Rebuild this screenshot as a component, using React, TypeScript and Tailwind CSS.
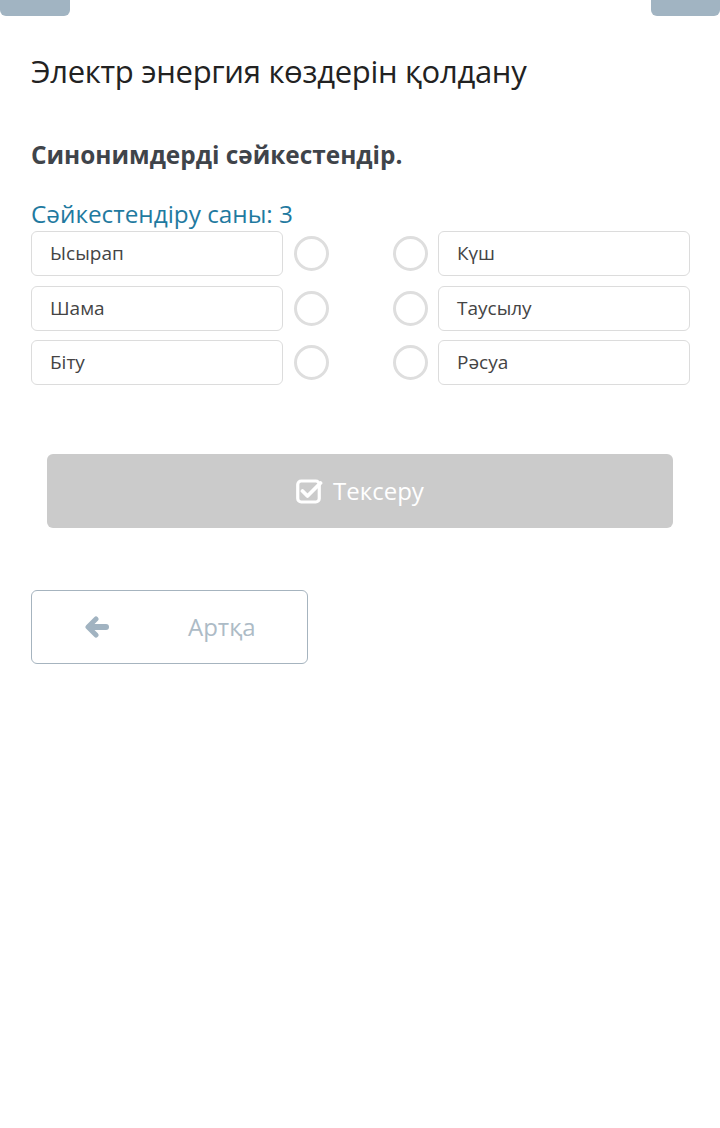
import React from 'react';

const left = ['Ысырап', 'Шама', 'Біту'];
const right = ['Күш', 'Таусылу', 'Рәсуа'];

const Circle: React.FC = () => (
  <div className="h-[35px] w-[35px] shrink-0 rounded-full border-[3px] border-[#dedede] bg-white" />
);

const Item: React.FC<{ text: string }> = ({ text }) => (
  <div className="flex h-[45px] w-[252px] shrink-0 items-center rounded-[6px] border border-[#dcdcdc] bg-white pl-[18px] text-[19px] text-[#444]">
    {text}
  </div>
);

const App: React.FC = () => {
  return (
    <div className="relative min-h-[1128px] w-[720px] bg-white font-['Open_Sans',sans-serif]">
      <div className="flex justify-between">
        <div className="h-[16px] w-[70px] rounded-b-[6px] bg-[#a1b4c2]" />
        <div className="h-[16px] w-[69px] rounded-b-[6px] bg-[#a1b4c2]" />
      </div>

      <div className="px-[31px]">
        <h1 className="mt-[33px] text-[31px] leading-[44px] text-[#222] tracking-[-0.3px]">
          Электр энергия көздерін қолдану
        </h1>

        <h2 className="mt-[46px] text-[24.4px] font-bold leading-[32px] text-[#3f444a]">
          Синонимдерді сәйкестендір.
        </h2>

        <div className="mt-[28px] text-[24.3px] leading-[30px] text-[#1f7aa0]">
          Сәйкестендіру саны: 3
        </div>

        <div className="mt-[2px] flex flex-col gap-[9.5px]">
          {left.map((l, i) => (
            <div key={l} className="flex items-center">
              <Item text={l} />
              <div className="ml-[10.5px]">
                <Circle />
              </div>
              <div className="ml-[64px]">
                <Circle />
              </div>
              <div className="ml-[10.5px]">
                <Item text={right[i]} />
              </div>
            </div>
          ))}
        </div>

        <div className="mt-[69px] px-[16px]">
          <button className="flex h-[74px] w-full items-center justify-center gap-[10px] rounded-[6px] bg-[#cbcbcb] text-[24px] text-white">
            <svg width="27" height="25" viewBox="0 0 27 25" fill="none">
              <rect x="1.75" y="2" width="21.5" height="21" rx="3.5" stroke="white" strokeWidth="3.2" />
              <path d="M6.5 12l5 5L24.5 4" stroke="white" strokeWidth="3.8" strokeLinecap="round" strokeLinejoin="round" />
            </svg>
            <span>Тексеру</span>
          </button>
        </div>

        <div className="mt-[62px]">
          <button className="flex h-[74px] w-[277px] items-center rounded-[6px] border border-[#a6b4bf] bg-white text-[24px] text-[#adbbc6]">
            <svg className="ml-[53px]" width="24" height="22" viewBox="0 0 24 22" fill="none">
              <path d="M11 3L3 11l8 8" stroke="#a1b3c1" strokeWidth="5" strokeLinecap="round" strokeLinejoin="round" />
              <path d="M5 11h16" stroke="#a1b3c1" strokeWidth="6" strokeLinecap="round" />
            </svg>
            <span className="ml-[79px]">Артқа</span>
          </button>
        </div>
      </div>
    </div>
  );
};

export default App;
